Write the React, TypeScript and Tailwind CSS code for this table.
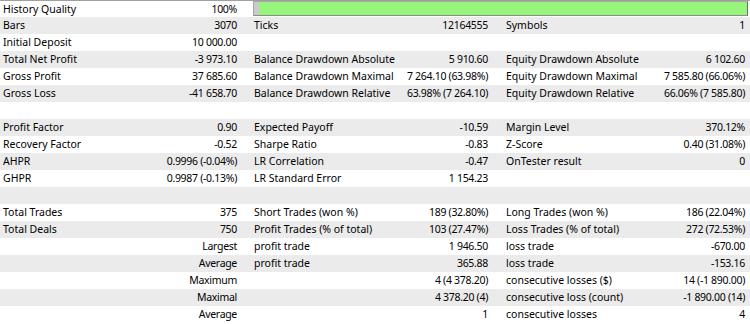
type Row = [string, string, string, string, string, string];

const rows: Row[] = [
  ["Bars", "3070", "Ticks", "12164555", "Symbols", "1"],
  ["Initial Deposit", "10 000.00", "", "", "", ""],
  ["Total Net Profit", "-3 973.10", "Balance Drawdown Absolute", "5 910.60", "Equity Drawdown Absolute", "6 102.60"],
  ["Gross Profit", "37 685.60", "Balance Drawdown Maximal", "7 264.10 (63.98%)", "Equity Drawdown Maximal", "7 585.80 (66.06%)"],
  ["Gross Loss", "-41 658.70", "Balance Drawdown Relative", "63.98% (7 264.10)", "Equity Drawdown Relative", "66.06% (7 585.80)"],
  ["", "", "", "", "", ""],
  ["Profit Factor", "0.90", "Expected Payoff", "-10.59", "Margin Level", "370.12%"],
  ["Recovery Factor", "-0.52", "Sharpe Ratio", "-0.83", "Z-Score", "0.40 (31.08%)"],
  ["AHPR", "0.9996 (-0.04%)", "LR Correlation", "-0.47", "OnTester result", "0"],
  ["GHPR", "0.9987 (-0.13%)", "LR Standard Error", "1 154.23", "", ""],
  ["", "", "", "", "", ""],
  ["Total Trades", "375", "Short Trades (won %)", "189 (32.80%)", "Long Trades (won %)", "186 (22.04%)"],
  ["Total Deals", "750", "Profit Trades (% of total)", "103 (27.47%)", "Loss Trades (% of total)", "272 (72.53%)"],
  ["", "Largest", "profit trade", "1 946.50", "loss trade", "-670.00"],
  ["", "Average", "profit trade", "365.88", "loss trade", "-153.16"],
  ["", "Maximum", "", "4 (4 378.20)", "consecutive losses ($)", "14 (-1 890.00)"],
  ["", "Maximal", "", "4 378.20 (4)", "consecutive loss (count)", "-1 890.00 (14)"],
  ["", "Average", "", "1", "consecutive losses", "4"],
];

// values use tighter tracking: the original font has narrow figures
const value = "flex justify-end tracking-[-0.3px]";

function ReportRow({ row, shaded }: { row: Row; shaded: boolean }) {
  return (
    <div
      className={
        "grid h-[17px] grid-cols-[130px_110px_160px_91px_159px_100px] items-center whitespace-nowrap " +
        (shaded ? "bg-[#ebebeb]" : "bg-white")
      }
    >
      <span className="pl-[3px]">{row[0]}</span>
      <span className={value + " pr-[3px]"}>{row[1]}</span>
      <span className="pl-[14px]">{row[2]}</span>
      <span className={value + " pr-[3px]"}>{row[3]}</span>
      <span className="pl-[15px]">{row[4]}</span>
      <span className={value + " pr-[5px]"}>{row[5]}</span>
    </div>
  );
}

export default function App() {
  return (
    <div
      className="w-[750px] h-[324px] overflow-hidden bg-white text-[10.5px] leading-none text-black border-t border-[#a0a0a0]"
      style={{ fontFamily: '"Noto Sans", "Open Sans", sans-serif' }}
    >
      <div className="grid h-[16px] grid-cols-[130px_110px_510px] items-center whitespace-nowrap bg-white">
        <span className="pl-[3px]">History Quality</span>
        <span className={value + " pr-[3px]"}>100%</span>
        <div className="ml-[13px] mr-[2px] flex h-[15px] self-start border border-[#a8a8a8] border-r-[#6e6e6e] border-b-[#8a8a8a]">
          <div className="w-[5px] bg-[#cacaca]" />
          <div className="flex-1 bg-[#98f57c]" />
        </div>
      </div>
      {rows.map((row, i) => (
        <ReportRow key={i} row={row} shaded={i % 2 === 0} />
      ))}
    </div>
  );
}
